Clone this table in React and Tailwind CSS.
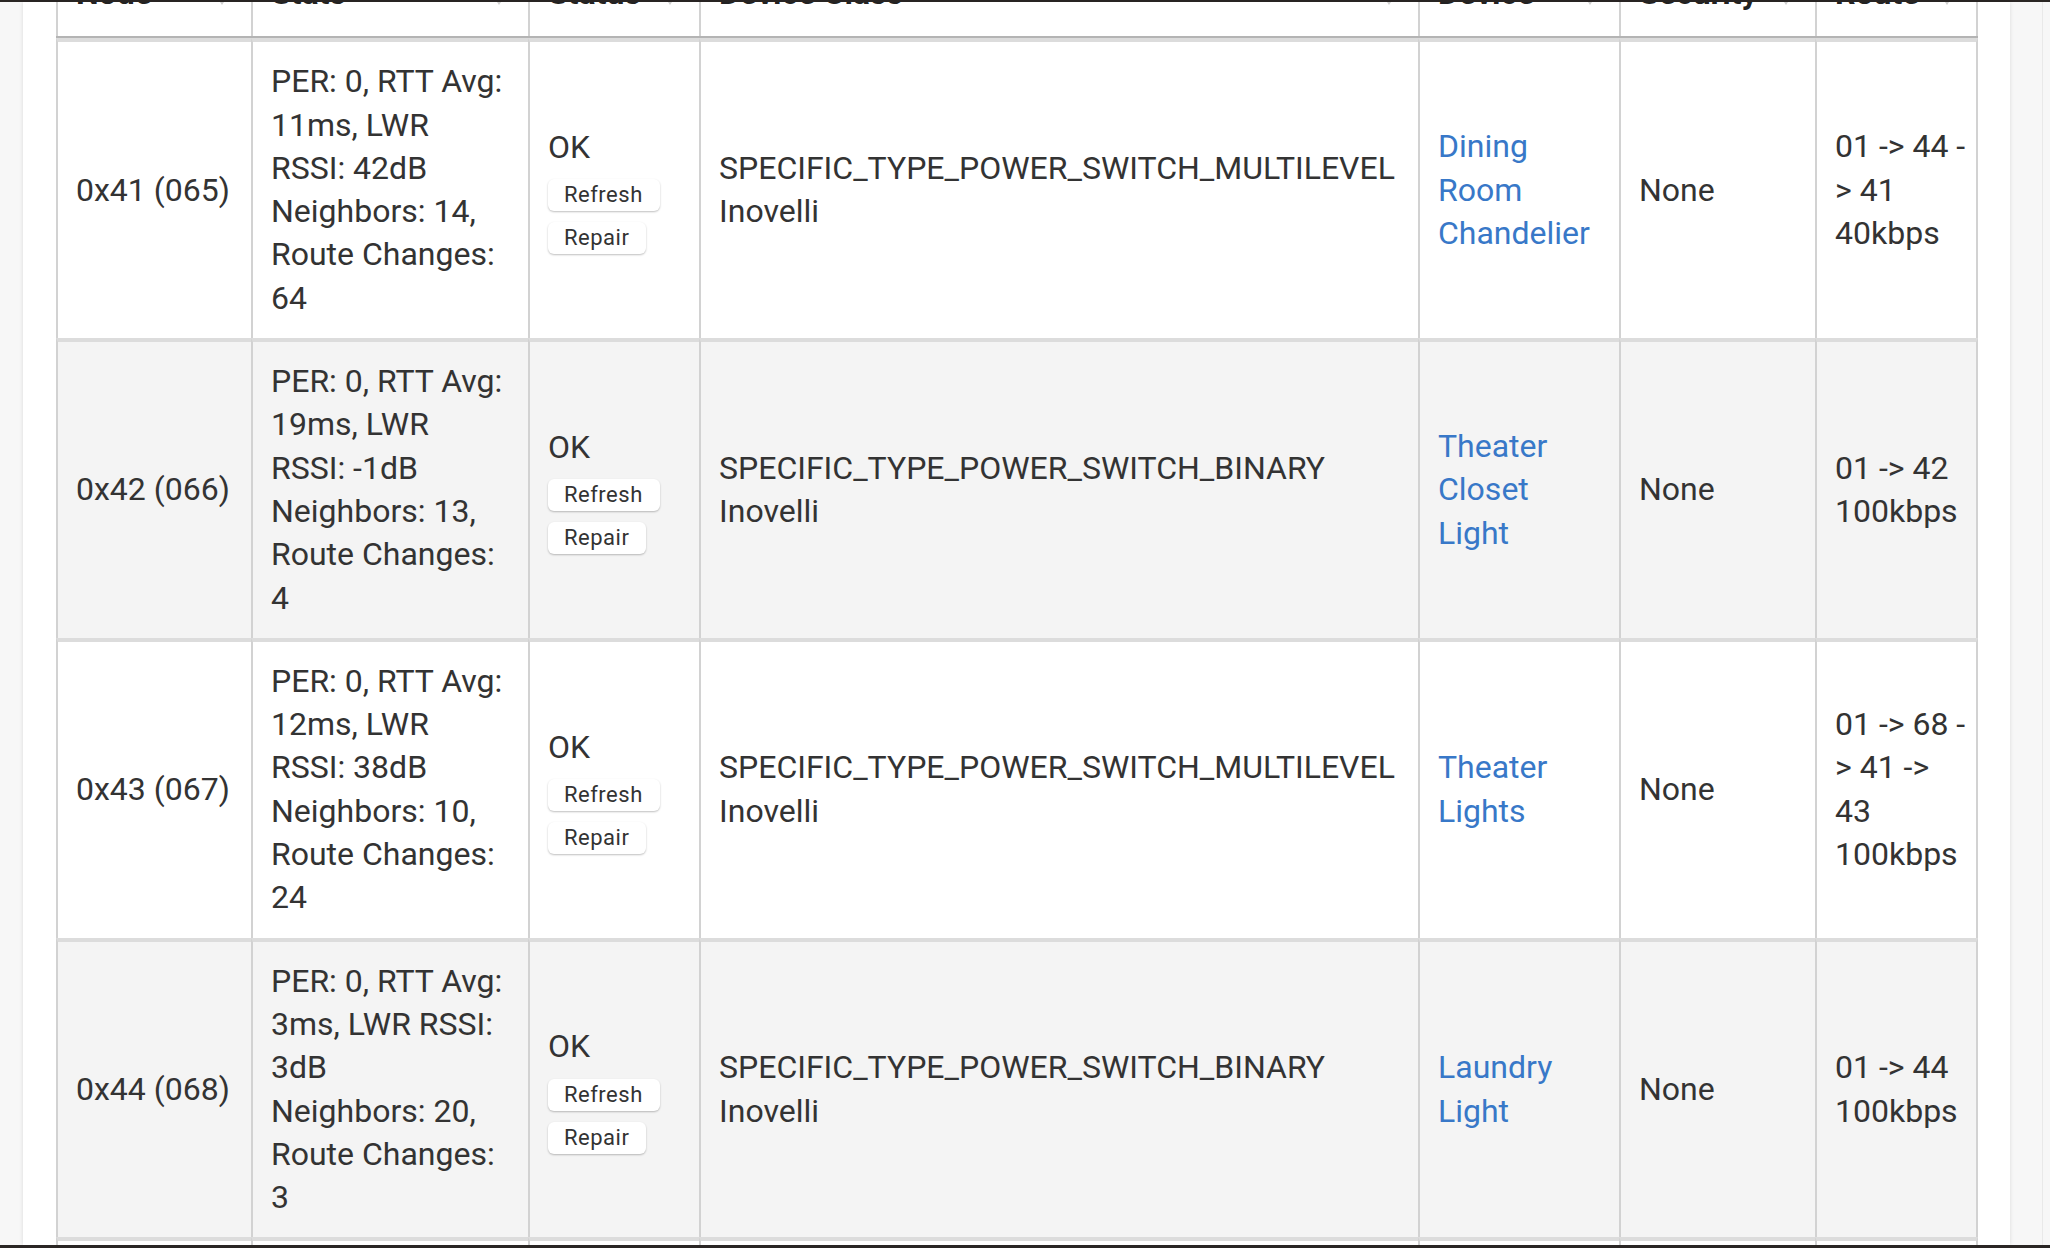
const headers = ['Node', 'Stats', 'Status', 'Device Class', 'Device', 'Security', 'Route'];

const nodes = [
  {
    id: '0x41 (065)',
    stats: ['PER: 0, RTT Avg:', '11ms, LWR', 'RSSI: 42dB', 'Neighbors: 14,', 'Route Changes:', '64'],
    type: 'SPECIFIC_TYPE_POWER_SWITCH_MULTILEVEL',
    device: ['Dining', 'Room', 'Chandelier'],
    route: ['01 -> 44 -', '> 41', '40kbps'],
  },
  {
    id: '0x42 (066)',
    stats: ['PER: 0, RTT Avg:', '19ms, LWR', 'RSSI: -1dB', 'Neighbors: 13,', 'Route Changes:', '4'],
    type: 'SPECIFIC_TYPE_POWER_SWITCH_BINARY',
    device: ['Theater', 'Closet', 'Light'],
    route: ['01 -> 42', '100kbps'],
  },
  {
    id: '0x43 (067)',
    stats: ['PER: 0, RTT Avg:', '12ms, LWR', 'RSSI: 38dB', 'Neighbors: 10,', 'Route Changes:', '24'],
    type: 'SPECIFIC_TYPE_POWER_SWITCH_MULTILEVEL',
    device: ['Theater', 'Lights'],
    route: ['01 -> 68 -', '> 41 ->', '43', '100kbps'],
  },
  {
    id: '0x44 (068)',
    stats: ['PER: 0, RTT Avg:', '3ms, LWR RSSI:', '3dB', 'Neighbors: 20,', 'Route Changes:', '3'],
    type: 'SPECIFIC_TYPE_POWER_SWITCH_BINARY',
    device: ['Laundry', 'Light'],
    route: ['01 -> 44', '100kbps'],
  },
];

const grid = 'grid grid-cols-[195px_277px_171px_719px_201px_196px_163px]';
const cell = 'border-l-2 border-t-4 border-l-[#d2d2d2] border-t-[#dcdcdc] px-[18px] py-[18px] flex flex-col justify-center';

function Lines({ items, className = '' }) {
  return (
    <div className={className}>
      {items.map((t, i) => (
        <div key={i} className="whitespace-nowrap">{t}</div>
      ))}
    </div>
  );
}

function SmallButton({ children, className = '' }) {
  return (
    <button className={`block h-[32px] pl-4 pr-[17px] rounded-md bg-white text-[22px] leading-[32px] tracking-[0.5px] text-[#333] shadow-[0_1px_2px_rgba(0,0,0,0.25)] ${className}`}>
      {children}
    </button>
  );
}

export default function App() {
  return (
    <div className="w-[2050px] h-[1248px] bg-[#f7f7f7] flex flex-col overflow-hidden font-['Roboto',sans-serif] text-[#333]">
      <div className="h-[2px] bg-[#2a2624]" />
      <div className="flex h-[1243px]">
        <div className="w-[23px]" />
        <div className="w-[1987px] bg-white pl-[33px] pr-[32px] overflow-hidden shadow-[0_0_4px_rgba(0,0,0,0.12)]">
          <div className="-mt-[48px] text-[32px] leading-[43.3px]">
            {/* header, mostly scrolled out of view */}
            <div className={`${grid} border-b-2 border-[#b4b4b4]`}>
              {headers.map((h, i) => (
                <div
                  key={h}
                  className={`border-l-2 border-[#d2d2d2] px-[18px] pt-[18px] pb-[21px] flex items-end justify-between font-bold text-[#222] ${i === headers.length - 1 ? 'border-r-2' : ''}`}
                >
                  <span className="whitespace-nowrap">{h}</span>
                  <span className="mb-[10px] mr-[7px] w-0 h-0 border-x-[4px] border-x-transparent border-t-[6px] border-t-[#cfcfcf]" />
                </div>
              ))}
            </div>

            {nodes.map((n, idx) => (
              <div key={n.id} className={`${grid} ${idx % 2 ? 'bg-[#f4f4f4]' : 'bg-white'}`}>
                <div className={cell}>
                  <div className="whitespace-nowrap">{n.id}</div>
                </div>
                <div className={cell}>
                  <Lines items={n.stats} />
                </div>
                <div className={cell}>
                  <div className="flex flex-col items-start">
                    <div>OK</div>
                    <SmallButton className="mt-[10px]">Refresh</SmallButton>
                    <SmallButton className="mt-[11px]">Repair</SmallButton>
                  </div>
                </div>
                <div className={cell}>
                  <div className="whitespace-nowrap">{n.type}</div>
                  <div>Inovelli</div>
                </div>
                <div className={cell}>
                  <a href="#" className="text-[#3878c8]">
                    <Lines items={n.device} />
                  </a>
                </div>
                <div className={cell}>
                  <div>None</div>
                </div>
                <div className={`${cell} border-r-2 border-r-[#d2d2d2]`}>
                  <Lines items={n.route} />
                </div>
              </div>
            ))}

            {/* next row, cut off by the bottom edge */}
            <div className={`${grid} bg-white h-[40px]`}>
              {headers.map((h, i) => (
                <div
                  key={h}
                  className={`border-l-2 border-t-4 border-l-[#d2d2d2] border-t-[#dcdcdc] ${i === headers.length - 1 ? 'border-r-2 border-r-[#d2d2d2]' : ''}`}
                />
              ))}
            </div>
          </div>
        </div>
        <div className="flex-1 flex">
          <div className="w-[33px] border-r border-[#e9e9e9]" />
        </div>
      </div>
      <div className="h-[3px] bg-[#2a2624]" />
    </div>
  );
}
